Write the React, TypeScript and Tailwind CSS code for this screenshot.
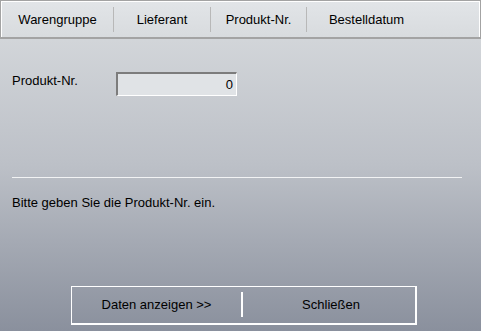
import React from "react";

const tabs = [
  { label: "Warengruppe", w: "w-[111px]" },
  { label: "Lieferant", w: "w-[97px]" },
  { label: "Produkt-Nr.", w: "w-[96px]" },
  { label: "Bestelldatum", w: "w-[120px]" },
];

export default function App() {
  return (
    <div
      className="w-[481px] h-[331px] flex flex-col text-[13px] text-black bg-gradient-to-b from-[#d9dcdf] via-[#bcc0c7] to-[#8a909d]"
      style={{ fontFamily: '"Liberation Sans", Arial, sans-serif' }}
    >
      <div className="h-[39px] shrink-0 border border-b-2 border-[#a3a3a3] bg-gradient-to-b from-[#e2e5e8] to-[#d8dbde]">
        <div className="h-full border-l border-t border-r border-white flex items-center">
          {tabs.map((t, i) => (
            <div
              key={t.label}
              className={`${t.w} flex items-center justify-center h-[25px] ${
                i > 0 ? "border-l border-[#b8b8b8]" : ""
              }`}
            >
              <span className="pt-[1px]">{t.label}</span>
            </div>
          ))}
        </div>
      </div>
      <div className="flex flex-col px-3 flex-1">
        <div className="flex items-start mt-[33px]">
          <span className="w-[104px] mt-[-1px]">Produkt-Nr.</span>
          <div className="w-[121px] h-[24px] border-t-2 border-l-2 border-t-[#7c7c7c] border-l-[#7c7c7c] border-b border-r border-b-white border-r-white bg-[#e0e3e6] flex items-center justify-end pr-[3px]">
            0
          </div>
        </div>
        <div className="mt-[81px] h-[1px] w-[450px] bg-[#f2f3f4]" />
        <div className="mt-[15px]">Bitte geben Sie die Produkt-Nr. ein.</div>
        <div className="mt-[73px] ml-[59px] w-[346px] h-[39px] border-t border-l border-b-2 border-r-2 border-white flex items-center">
          <div className="w-[171px] h-[25px] flex items-center justify-center border-r-2 border-white">
            Daten anzeigen &gt;&gt;
          </div>
          <div className="flex-1 flex items-center justify-center pl-[4px]">Schließen</div>
        </div>
      </div>
    </div>
  );
}
